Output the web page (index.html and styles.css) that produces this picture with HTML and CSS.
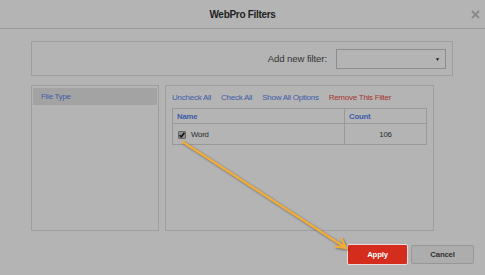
FILE: index.html
```html
<!DOCTYPE html>
<html lang="en">
<head>
  <meta charset="UTF-8">
  <title>WebPro Filters</title>
  <link rel="stylesheet" href="styles.css">
</head>
<body>
  <div class="dialog">
    <div class="dialog-head">
      <span></span>
      <h1>WebPro Filters</h1>
      <span class="close">
        <svg width="9" height="9" viewBox="0 0 9 9"><path d="M1 1L8 8M8 1L1 8" stroke="#8a8a8a" stroke-width="2"/></svg>
      </span>
    </div>

    <div class="dialog-body">
      <div class="add-bar">
        <label>Add new filter:</label>
        <div class="select"><span class="caret">&#9660;</span></div>
      </div>

      <div class="panels">
        <div class="filter-list">
          <div class="filter-item active">File Type</div>
        </div>
        <div class="filter-detail">
          <div class="actions">
            <a href="#">Uncheck All</a>
            <a href="#">Check All</a>
            <a href="#">Show All Options</a>
            <a href="#" class="remove">Remove This Filter</a>
          </div>
          <table class="options">
            <thead>
              <tr><th class="col-name">Name</th><th>Count</th></tr>
            </thead>
            <tbody>
              <tr>
                <td class="col-name"><span class="check"><svg width="6" height="6" viewBox="0 0 6 6"><path d="M0.6 3.2L2.3 4.8L5.4 0.8" stroke="#111" stroke-width="1.5" fill="none"/></svg></span>Word</td>
                <td class="count">106</td>
              </tr>
            </tbody>
          </table>
        </div>
      </div>
    </div>

    <div class="dialog-foot">
      <button class="btn-apply">Apply</button>
      <button class="btn-cancel">Cancel</button>
    </div>
  </div>

  <svg class="pointer" width="485" height="275" viewBox="0 0 485 275">
    <g stroke="#f1ad3a" stroke-width="2.4" stroke-linecap="round" fill="none">
      <path d="M183 142L346 248"/>
      <path d="M336 246.5L346 248L341.5 239"/>
    </g>
  </svg>
</body>
</html>
```

FILE: styles.css
```css
body { margin: 0; width: 485px; height: 275px; overflow: hidden; position: relative; background: #b4b4b4; font-family: "Liberation Sans", Arial, sans-serif; color: #2a2a2a; }

.dialog-head { height: 28px; border-bottom: 1px solid #9a9a9a; display: grid; grid-template-columns: 1fr auto 1fr; align-items: center; }
.dialog-head h1 { margin: 0; font-size: 10px; letter-spacing: -0.3px; font-weight: bold; color: #222; }
.close { justify-self: end; padding-right: 5px; display: flex; }

.dialog-body { padding: 12px 32px 0 31px; }

.add-bar { height: 33px; border: 1px solid #9e9e9e; display: flex; align-items: center; justify-content: flex-end; gap: 9px; padding-right: 6px; }
.add-bar label { font-size: 9.6px; letter-spacing: -0.1px; color: #333; }
.select { width: 108px; height: 18px; border: 1px solid #8c8c8c; display: flex; align-items: center; justify-content: flex-end; }
.caret { font-size: 5px; color: #111; padding-right: 5px; }

.panels { display: flex; gap: 6px; margin-top: 9px; height: 146px; }
.filter-list { width: 124px; border: 1px solid #9e9e9e; padding: 2px 1px; box-sizing: content-box; }
.filter-item { height: 17px; line-height: 17px; padding-left: 8px; font-size: 7.8px; letter-spacing: -0.2px; color: #3d5ca8; }
.filter-item.active { background: #a3a3a3; }

.filter-detail { width: 255px; border: 1px solid #9e9e9e; padding: 0 6px; }
.actions { height: 22px; display: flex; align-items: center; gap: 10px; }
.actions a { font-size: 8px; letter-spacing: -0.25px; color: #3d5ca8; text-decoration: none; }
.actions a.remove { color: #a8332f; }

.options { width: 255px; border-collapse: collapse; font-size: 7.8px; letter-spacing: -0.2px; }
.options th, .options td { border: 1px solid #999; padding: 0 4px; }
.options th { height: 14px; text-align: left; color: #3d5ca8; font-weight: bold; }
.options td { height: 20px; }
.col-name { width: 163px; }
.options td.count { text-align: center; }
.check { display: inline-flex; align-items: center; justify-content: center; width: 6px; height: 6px; border: 1px solid #666; border-radius: 1px; background: #8e8e8e; margin: 0 5px 0 1px; vertical-align: -1px; }

.dialog-foot { display: flex; justify-content: flex-end; align-items: center; gap: 3px; padding-right: 11px; margin-top: 13px; }
.dialog-foot button { font-family: "Liberation Sans", Arial, sans-serif; font-weight: bold; font-size: 7.8px; letter-spacing: -0.2px; border-radius: 2px; padding: 0; cursor: pointer; }
.btn-apply { width: 61px; height: 21px; background: #d42d1d; color: #fff; border: 1px solid #e9dcda; }
.btn-cancel { width: 63px; height: 19px; background: #adadad; color: #333; border: 1px solid #979797; }

.pointer { position: absolute; left: 0; top: 0; pointer-events: none; filter: drop-shadow(1px 1.5px 1px rgba(0, 0, 0, 0.45)); }
```
